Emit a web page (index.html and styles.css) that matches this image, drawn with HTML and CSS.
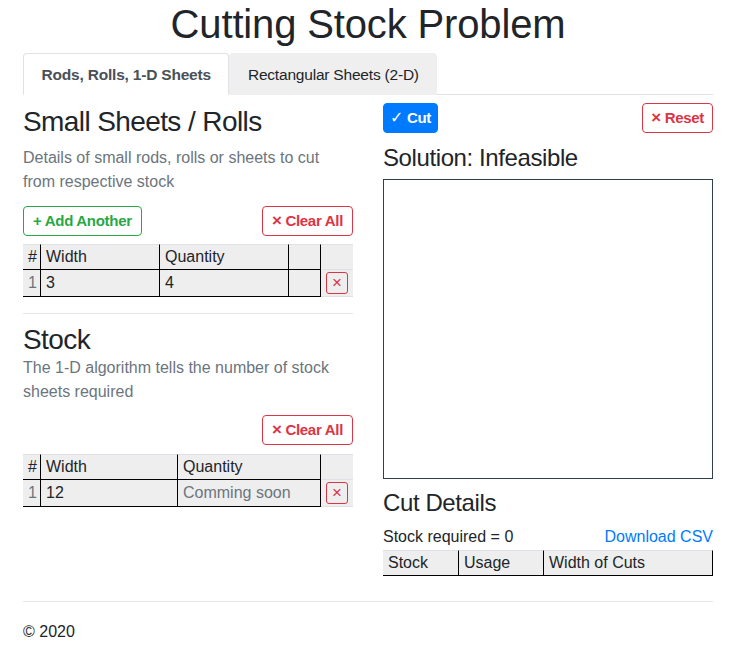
FILE: index.html
```html
<!DOCTYPE html>
<html lang="en">
<head>
<meta charset="utf-8">
<title>Cutting Stock Problem</title>
<link rel="stylesheet" href="styles.css">
</head>
<body>
<div class="container">
  <h1 class="title">Cutting Stock Problem</h1>
  <ul class="tabs">
    <li><a class="tab active">Rods, Rolls, 1-D Sheets</a></li>
    <li><a class="tab">Rectangular Sheets (2-D)</a></li>
  </ul>

  <div class="row">
    <div class="col">
      <h3 class="sec-title">Small Sheets / Rolls</h3>
      <p class="muted desc">Details of small rods, rolls or sheets to cut from respective stock</p>
      <div class="btn-row">
        <button class="btn btn-success">+ Add Another</button>
        <button class="btn btn-danger"><span class="ico">×</span> Clear All</button>
      </div>
      <div class="grid grid-items">
        <div class="cell head">#</div>
        <div class="cell head">Width</div>
        <div class="cell head">Quantity</div>
        <div class="cell head"></div>
        <div class="cell head last"></div>
        <div class="cell body muted">1</div>
        <div class="cell body">3</div>
        <div class="cell body">4</div>
        <div class="cell body"></div>
        <div class="cell body last"><button class="del">×</button></div>
      </div>

      <hr class="divider">

      <h3 class="sec-title stock-title">Stock</h3>
      <p class="muted desc desc-stock">The 1-D algorithm tells the number of stock sheets required</p>
      <div class="btn-row btn-row-end">
        <button class="btn btn-danger"><span class="ico">×</span> Clear All</button>
      </div>
      <div class="grid grid-stock">
        <div class="cell head">#</div>
        <div class="cell head">Width</div>
        <div class="cell head">Quantity</div>
        <div class="cell head last"></div>
        <div class="cell body muted">1</div>
        <div class="cell body">12</div>
        <div class="cell body muted">Comming soon</div>
        <div class="cell body last"><button class="del">×</button></div>
      </div>
    </div>

    <div class="col">
      <div class="btn-row">
        <button class="btn btn-primary"><span class="check">✓</span> Cut</button>
        <button class="btn btn-danger btn-reset"><span class="ico">×</span> Reset</button>
      </div>
      <h4 class="sol-title">Solution: Infeasible</h4>
      <div class="canvas-box"></div>
      <h4 class="sol-title cut-title">Cut Details</h4>
      <div class="stock-line">
        <span>Stock required = 0</span>
        <a class="link" href="#">Download CSV</a>
      </div>
      <div class="grid grid-cuts">
        <div class="cell head">Stock</div>
        <div class="cell head">Usage</div>
        <div class="cell head">Width of Cuts</div>
      </div>
    </div>
  </div>

  <hr class="footer-rule">
  <p class="footer">© 2020</p>
</div>
</body>
</html>
```

FILE: styles.css
```css
* { box-sizing: border-box; }

body {
  margin: 0;
  font-family: "Liberation Sans", Arial, sans-serif;
  font-size: 16px;
  line-height: 24px;
  color: #212529;
  background: #fff;
}

.container {
  width: 738px;
  padding: 0 25px 0 23px;
}

.title {
  margin: 0 0 5px;
  font-size: 40px;
  line-height: 48px;
  font-weight: 400;
  text-align: center;
  letter-spacing: -0.15px;
}

.tabs {
  display: flex;
  list-style: none;
  margin: 0;
  padding: 0;
  border-bottom: 1px solid #dee2e6;
}

.tab {
  display: block;
  margin-bottom: -1px;
  padding: 9px 17.5px 7px;
  border: 1px solid transparent;
  border-radius: 4px 4px 0 0;
  font-size: 15.5px;
  line-height: 24px;
  color: #212529;
  background: #efefef;
  letter-spacing: -0.2px;
}

.tab.active {
  color: #495057;
  font-weight: 700;
  background: #fff;
  border-color: #dee2e6 #dee2e6 #fff;
}

.row {
  display: flex;
  gap: 30px;
  margin-top: 8px;
}

.col { width: 330px; }

.sec-title {
  margin: 2px 0 7px;
  font-size: 28px;
  line-height: 34px;
  font-weight: 400;
  letter-spacing: -0.6px;
}

.stock-title {
  margin: 2px 0 0;
  line-height: 33px;
}

.muted { color: #6c757d; }

.desc { margin: 0 0 12px; }
.desc-stock { margin-bottom: 11px; }

.btn-row {
  display: flex;
  justify-content: space-between;
  margin-bottom: 8px;
}

.btn-row-end {
  justify-content: flex-end;
  margin-bottom: 9px;
}

.btn {
  font-family: inherit;
  font-size: 15px;
  font-weight: 700;
  letter-spacing: -0.3px;
  line-height: 20px;
  height: 30px;
  padding: 4px 9px;
  border: 1px solid;
  border-radius: 4px;
  background: #fff;
  cursor: pointer;
}

.ico {
  font-size: 17px;
  line-height: 0;
}

.check {
  font-family: "DejaVu Sans", sans-serif;
  font-size: 16px;
  font-weight: 700;
  line-height: 0;
}

.btn-success { color: #28a745; border-color: #28a745; }
.btn-danger { color: #dc3545; border-color: #dc3545; }
.btn-primary { color: #fff; background: #007bff; border-color: #007bff; padding: 4px 6px; }
.btn-reset { padding: 4px 8px; }

.grid { display: grid; }
.grid-items { grid-template-columns: 18px 119px 129px 32px 32px; }
.grid-stock { grid-template-columns: 18px 137px 143px 32px; }
.grid-cuts { grid-template-columns: 76px 85px 169px; }

.cell {
  background: #eee;
  padding: 0 5px;
  border-right: 1px solid #000;
  white-space: nowrap;
  overflow: hidden;
}

.head {
  border-top: 1px solid #dee2e6;
  border-bottom: 1px solid #000;
  line-height: 24px;
}

.body {
  border-bottom: 1px solid #000;
  line-height: 26px;
}

.cell.last {
  border-right: 0;
  border-bottom-color: #dee2e6;
  display: flex;
  align-items: center;
}

.del {
  width: 22px;
  height: 22px;
  padding: 0;
  border: 1px solid #dc3545;
  border-radius: 3px;
  background: transparent;
  color: #dc3545;
  font-family: inherit;
  font-size: 17px;
  line-height: 18px;
}

.divider {
  border: 0;
  border-top: 1px solid #e6e6e6;
  margin: 16px 0 9px;
}

.sol-title {
  margin: 10px 0 7px;
  font-size: 24px;
  line-height: 29px;
  font-weight: 400;
  letter-spacing: -0.4px;
}

.canvas-box {
  height: 300px;
  border: 1px solid #2f3f4f;
}

.cut-title { margin: 9px 0 8px; }

.stock-line {
  display: flex;
  justify-content: space-between;
  margin-bottom: 1px;
}

.link { color: #007bff; text-decoration: none; }

.footer-rule {
  border: 0;
  border-top: 1px solid #e6e6e6;
  margin: 25px 0 18px;
}

.footer { margin: 0; }
```
